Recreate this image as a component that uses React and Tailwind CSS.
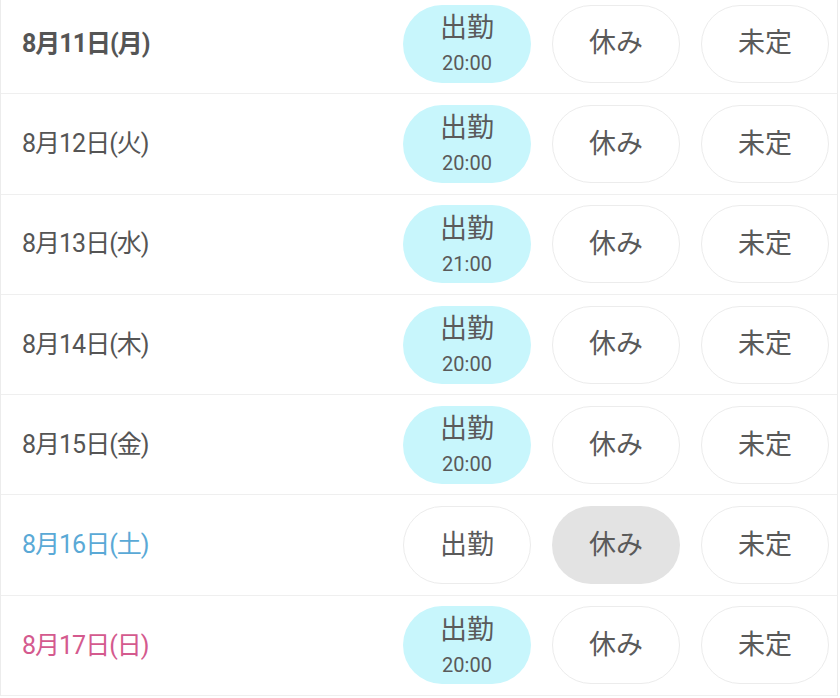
import React from "react";

const days = [
  { label: "8月11日(月)", tone: "bold", work: "20:00" },
  { label: "8月12日(火)", work: "20:00" },
  { label: "8月13日(水)", work: "21:00" },
  { label: "8月14日(木)", work: "20:00" },
  { label: "8月15日(金)", work: "20:00" },
  { label: "8月16日(土)", tone: "sat", off: true },
  { label: "8月17日(日)", tone: "sun", work: "20:00" },
];

const labelClass = {
  bold: "text-[#555555] font-bold",
  sat: "text-[#5aa9d6]",
  sun: "text-[#d45a8e]",
};

function Pill({ active, activeBg, children }) {
  return (
    <button
      className={
        "w-[128px] h-[78px] rounded-full flex flex-col items-center justify-center text-[#5a5a5a] " +
        (active ? activeBg : "bg-white border border-[#ececec]")
      }
    >
      {children}
    </button>
  );
}

export default function App() {
  return (
    <div
      className="w-[838px] bg-white -mt-[6px] border-l border-r border-[#ececec]"
      style={{ fontFamily: 'Roboto, "Noto Sans CJK JP", sans-serif' }}
    >
      {days.map((d) => (
        <div key={d.label} className="h-[100.3px] flex items-center border-b border-[#efefef] pl-[21px] pr-[8px]">
          <div className={"flex-1 text-[25px] tracking-[-1px] " + (labelClass[d.tone] || "text-[#555555]")}>{d.label}</div>
          <div className="flex gap-[21px]">
            <Pill active={!!d.work} activeBg="bg-[#c8f6fc]">
              <span className="text-[27px] leading-[34px]">出勤</span>
              {d.work && <span className="text-[20px] leading-[26px] mt-[5px]">{d.work}</span>}
            </Pill>
            <Pill active={!!d.off} activeBg="bg-[#e3e3e3]">
              <span className="text-[27px]">休み</span>
            </Pill>
            <Pill>
              <span className="text-[27px]">未定</span>
            </Pill>
          </div>
        </div>
      ))}
    </div>
  );
}
